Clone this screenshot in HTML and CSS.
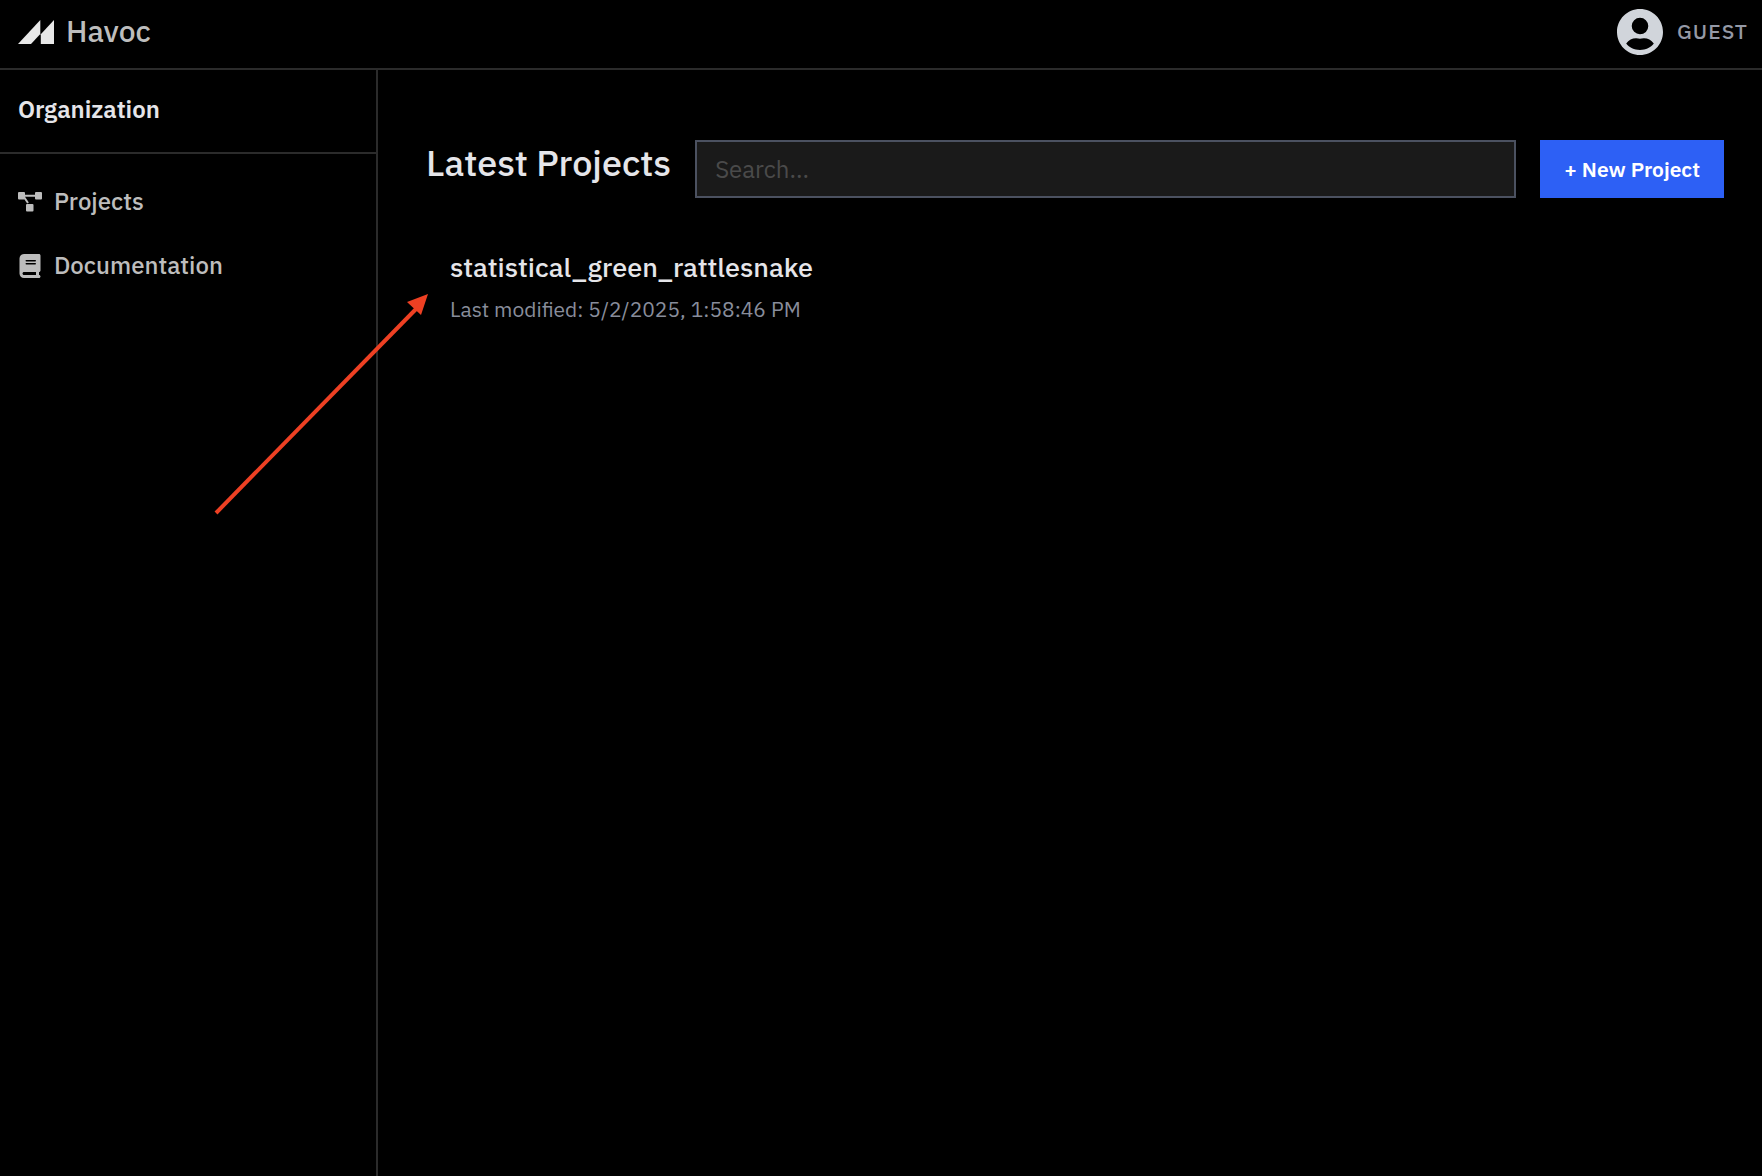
FILE: index.html
```
<!DOCTYPE html>
<html lang="en">
<head>
    <meta charset="UTF-8">
    <meta name="viewport" content="width=device-width, initial-scale=1">
    <title>Havoc</title>

    <link rel="stylesheet" href="styles.css">
</head>
<body>

    <header class="topbar">
        <a href="#" class="brand">
            <svg class="brand-logo" viewBox="0 0 36 24" aria-hidden="true">
                <path d="M0 24 22.300 0V14L13 24z"/>
                <path d="M22.800 24V14.200L36 0v24z"/>
            </svg>
            <span class="label">Havoc</span>
        </a>

        <button type="button" class="account">
            <svg class="avatar" viewBox="2 2 20 20" aria-hidden="true">
                <path d="M12 2C6.480 2 2 6.480 2 12s4.480 10 10 10 10-4.480 10-10S17.520 2 12 2zm0 3.800a3.600 3.600 0 1 1 0 7.200 3.600 3.600 0 0 1 0-7.200zm0 14c-2.500 0-4.700-1.100-6-2.800 1.100-1.600 2.900-2.400 4.400-2.300.6.100 1.100.2 1.600.2s1-.1 1.600-.2c1.500-.1 3.300.7 4.400 2.300-1.300 1.700-3.500 2.800-6 2.800z"/>
            </svg>
            <span class="label">GUEST</span>
        </button>
    </header>

    <div class="layout">
        <aside class="sidebar">
            <h2 class="sidebar-title">Organization</h2>

            <nav class="menu">
                <a href="#" class="menu-link">
                    <svg class="menu-icon" viewBox="0 0 24 24" aria-hidden="true">
                        <path d="M7 5.800h10M6 7l4 6" stroke="currentColor" stroke-width="2"/>
                        <rect x="0" y="2" width="7" height="7.500" rx="1"/>
                        <rect x="17" y="2" width="7" height="7.500" rx="1"/>
                        <rect x="8" y="14" width="7.500" height="7.500" rx="1"/>
                    </svg>
                    <span class="label">Projects</span>
                </a>
                <a href="#" class="menu-link">
                    <svg class="menu-icon" viewBox="0 0 448 512" aria-hidden="true">
                        <path d="M96 0C43 0 0 43 0 96v320c0 53 43 96 96 96h320c17.700 0 32-14.300 32-32s-14.300-32-32-32v-64c17.700 0 32-14.300 32-32V32c0-17.700-14.300-32-32-32H96zm0 384h256v64H96c-17.700 0-32-14.300-32-32s14.300-32 32-32zm32-240c0-8.800 7.200-16 16-16h192c8.800 0 16 7.200 16 16s-7.200 16-16 16H144c-8.800 0-16-7.200-16-16zm16 48h192c8.800 0 16 7.200 16 16s-7.200 16-16 16H144c-8.800 0-16-7.200-16-16s7.200-16 16-16z"/>
                    </svg>
                    <span class="label">Documentation</span>
                </a>
            </nav>
        </aside>

        <main class="content">
            <div class="toolbar">
                <h1 class="heading">Latest Projects</h1>
                <input type="search" class="search" placeholder="Search..." aria-label="Search projects">
                <button type="button" class="new-project">+ New Project</button>
            </div>

            <ul class="projects">
                <li class="project">
                    <a href="#" class="project-name">statistical_green_rattlesnake</a>
                    <p class="project-date">Last modified: 5/2/2025, 1:58:46 PM</p>
                </li>
            </ul>
        </main>
    </div>

    <svg class="arrow" viewBox="0 0 216 224" aria-hidden="true">
        <path d="M2 219 203 14" stroke="currentColor" stroke-width="4"/>
        <path d="M214 0l-7 21-14-13z"/>
    </svg>

</body>
</html>
```
FILE: styles.css
```
*, *:after, *:before {
    box-sizing: border-box;
    margin: 0;
    padding: 0;
}

body {
    background: #000;
    color: #e5e5e9;
    display: flex;
    flex-direction: column;
    font-family: "IBM Plex Sans", "Noto Sans", sans-serif;
    min-height: 100vh;
    position: relative;
}

a {
    color: inherit;
    text-decoration: none;
}

button, input {
    font-family: inherit;
}

svg {
    fill: currentColor;
}

/* text beside an icon */
.label {
    line-height: 30px;
    padding-bottom: 2px;
}

/* top bar */
.topbar {
    align-items: center;
    border-bottom: 2px solid #2b2b2b;
    display: flex;
    height: 70px;
    justify-content: space-between;
    padding: 0 14px 4px 18px;
}

.brand {
    align-items: center;
    color: #bdbdbd;
    display: flex;
    font-size: 30px;
    font-weight: 500;
    gap: 12px;
}

.brand-logo {
    color: #e8e8e8;
    height: 24px;
    width: 36px;
}

.account {
    align-items: center;
    background: none;
    border: 0;
    color: #9499a6;
    cursor: pointer;
    display: flex;
    font-size: 21px;
    font-weight: 500;
    gap: 14px;
    letter-spacing: 1px;
}

.avatar {
    color: #d1d5db;
    height: 46px;
    width: 46px;
}

/* layout */
.layout {
    display: flex;
    flex: 1;
}

.sidebar {
    border-right: 2px solid #2b2b2b;
    flex: 0 0 378px;
}

.sidebar-title {
    border-bottom: 2px solid #2b2b2b;
    font-size: 24px;
    font-weight: 600;
    line-height: 30px;
    padding: 24px 18px 28px;
}

.menu {
    color: #bdbdbd;
    display: flex;
    flex-direction: column;
    font-size: 24px;
    font-weight: 500;
    gap: 32px;
    padding: 32px 18px;
}

.menu-link {
    align-items: center;
    display: flex;
    gap: 12px;
}

.menu-icon {
    height: 24px;
    width: 24px;
}

.content {
    flex: 1;
    padding: 70px 38px 38px 48px;
}

/* heading, search and button */
.toolbar {
    display: flex;
    gap: 24px;
}

.heading {
    font-size: 36px;
    font-weight: 500;
    line-height: 46px;
    white-space: nowrap;
}

.search {
    background: #1a1a1a;
    border: 2px solid #4b5160;
    color: #e5e5e9;
    flex: 1;
    font-size: 24px;
    height: 58px;
    min-width: 0;
    padding: 0 18px;
}

.search::placeholder {
    color: #4a4a4a;
}

.new-project {
    background: #2d60f5;
    border: 0;
    color: #fff;
    cursor: pointer;
    font-size: 21px;
    font-weight: 600;
    height: 58px;
    padding: 0 24px;
    white-space: nowrap;
}

/* project list */
.projects {
    list-style: none;
    padding: 50px 24px;
}

.project-name {
    display: block;
    font-size: 27px;
    font-weight: 500;
    line-height: 38px;
}

.project-date {
    color: #888d9b;
    font-size: 21px;
    line-height: 30px;
    margin-top: 8px;
}

/* pointer drawn over the page */
.arrow {
    color: #ee4023;
    height: 224px;
    left: 214px;
    pointer-events: none;
    position: absolute;
    top: 294px;
    width: 216px;
}
```
